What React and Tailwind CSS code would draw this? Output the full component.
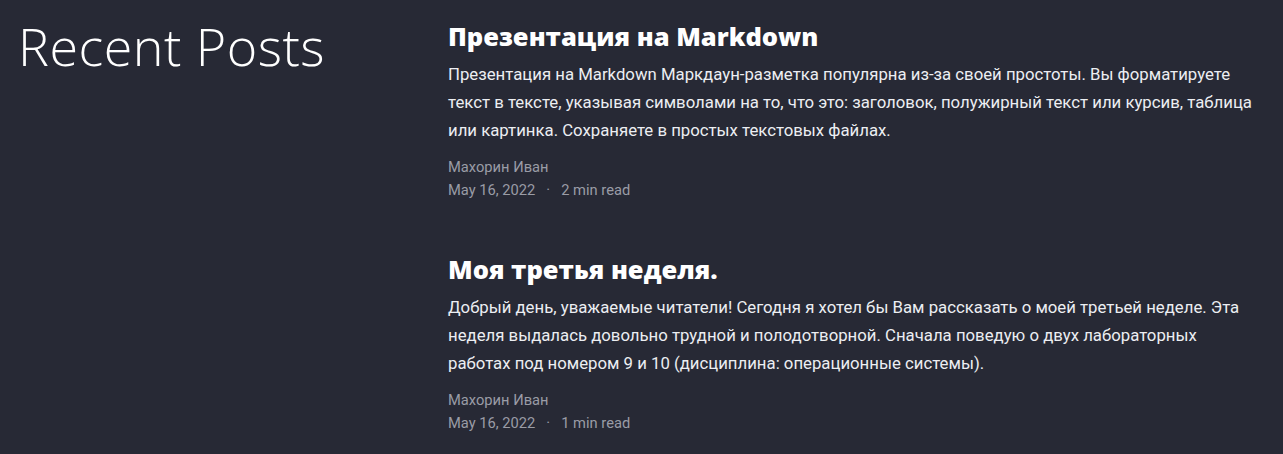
export default function App() {
  const posts = [
    {
      title: "Презентация на Markdown",
      text: "Презентация на Markdown Маркдаун-разметка популярна из-за своей простоты. Вы форматируете текст в тексте, указывая символами на то, что это: заголовок, полужирный текст или курсив, таблица или картинка. Сохраняете в простых текстовых файлах.",
      read: "2 min read",
    },
    {
      title: "Моя третья неделя.",
      text: "Добрый день, уважаемые читатели! Сегодня я хотел бы Вам рассказать о моей третьей неделе. Эта неделя выдалась довольно трудной и полодотворной. Сначала поведую о двух лабораторных работах под номером 9 и 10 (дисциплина: операционные системы).",
      read: "1 min read",
    },
  ];
  return (
    <div className="min-h-[454px] bg-[#272935] flex">
      <div className="w-[448px] shrink-0 pl-[18px] pt-[16px]">
        <h1 className="text-[52px] font-light text-white leading-[60px] tracking-[0.5px]" style={{ fontFamily: '"Open Sans", sans-serif' }}>
          Recent Posts
        </h1>
      </div>
      <div className="flex flex-col gap-[49px] pt-[18px]">
        {posts.map((p, i) => (
          <div key={i}>
            <h2 className="text-[25.5px] font-extrabold text-white leading-[36px]" style={{ fontFamily: '"Open Sans", sans-serif' }}>
              {p.title}
            </h2>
            <p className="mt-[6px] w-[812px] text-[16.75px] font-normal leading-[28px] text-[#eceef2]" style={{ fontFamily: 'Roboto, sans-serif' }}>
              {p.text}
            </p>
            <div className="mt-[12px] text-[14.7px] font-normal text-[#9a9ca6] leading-[23px]" style={{ fontFamily: 'Roboto, sans-serif' }}>
              <div>Махорин Иван</div>
              <div className="flex">
                <span>May 16, 2022</span>
                <span className="mx-[11px]">·</span>
                <span>{p.read}</span>
              </div>
            </div>
          </div>
        ))}
      </div>
    </div>
  );
}
